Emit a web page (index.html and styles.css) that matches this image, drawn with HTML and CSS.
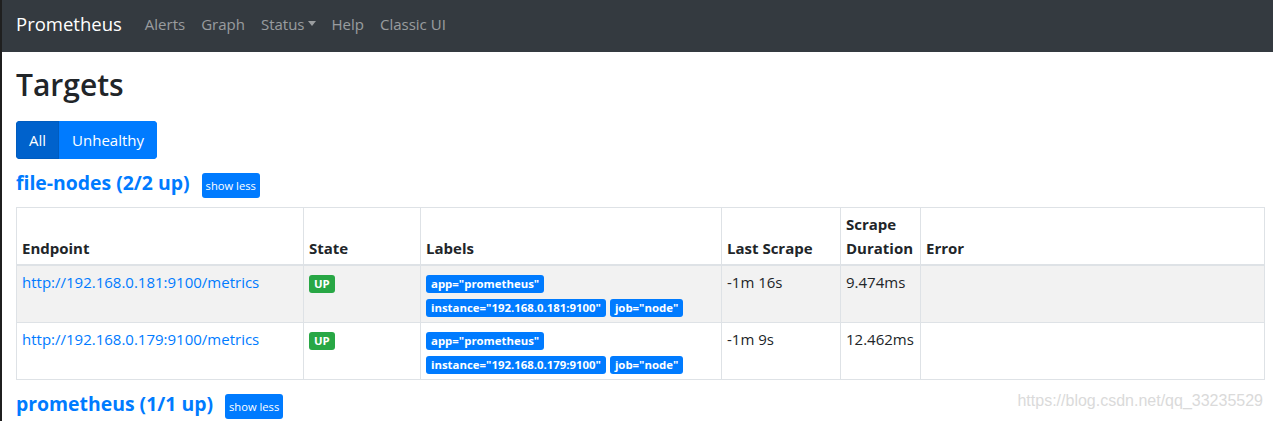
FILE: index.html
```html
<!DOCTYPE html>
<html lang="en">
<head>
<meta charset="utf-8">
<title>Prometheus Time Series Collection and Processing Server</title>
<link rel="stylesheet" href="styles.css">
</head>
<body>
<nav class="navbar">
  <a class="brand" href="#">Prometheus</a>
  <ul class="nav">
    <li><a class="nav-link" href="#">Alerts</a></li>
    <li><a class="nav-link" href="#">Graph</a></li>
    <li><a class="nav-link dropdown-toggle" href="#">Status</a></li>
    <li><a class="nav-link" href="#">Help</a></li>
    <li><a class="nav-link" href="#">Classic UI</a></li>
  </ul>
</nav>
<main class="container">
  <h2 class="title">Targets</h2>
  <div class="btn-group">
    <button class="btn active">All</button><button class="btn">Unhealthy</button>
  </div>

  <section class="pool">
    <div class="pool-header">
      <a class="pool-name" href="#">file-nodes (2/2 up)</a>
      <button class="btn-xs">show less</button>
    </div>
    <table class="targets">
      <colgroup>
        <col class="c-endpoint"><col class="c-state"><col class="c-labels"><col class="c-last"><col class="c-dur"><col class="c-err">
      </colgroup>
      <thead>
        <tr><th>Endpoint</th><th>State</th><th>Labels</th><th>Last Scrape</th><th>Scrape Duration</th><th>Error</th></tr>
      </thead>
      <tbody>
        <tr class="striped">
          <td><a href="#">http://192.168.0.181:9100/metrics</a></td>
          <td><span class="badge badge-up">UP</span></td>
          <td><span class="badge">app="prometheus"</span> <span class="badge">instance="192.168.0.181:9100"</span> <span class="badge">job="node"</span></td>
          <td>-1m 16s</td>
          <td>9.474ms</td>
          <td></td>
        </tr>
        <tr>
          <td><a href="#">http://192.168.0.179:9100/metrics</a></td>
          <td><span class="badge badge-up">UP</span></td>
          <td><span class="badge">app="prometheus"</span> <span class="badge">instance="192.168.0.179:9100"</span> <span class="badge">job="node"</span></td>
          <td>-1m 9s</td>
          <td>12.462ms</td>
          <td></td>
        </tr>
      </tbody>
    </table>
  </section>

  <section class="pool">
    <div class="pool-header">
      <a class="pool-name" href="#">prometheus (1/1 up)</a>
      <button class="btn-xs">show less</button>
    </div>
  </section>
</main>
<div class="watermark">https://blog.csdn.net/qq_33235529</div>
</body>
</html>
```
FILE: styles.css
```css
html, body {
  margin: 0;
  padding: 0;
}
body {
  font-family: "Open Sans", "Noto Sans", sans-serif;
  font-size: 15px;
  line-height: 24px;
  color: #212529;
  background: #fff;
  border-left: 2px solid #1f1f1f;
  min-height: 100vh;
  box-sizing: border-box;
  overflow: hidden;
}
a {
  text-decoration: none;
  color: #007bff;
}

/* navbar */
.navbar {
  display: flex;
  align-items: center;
  height: 52px;
  box-sizing: border-box;
  padding: 0 16px 5px 14px;
  background: #343a40;
}
.brand {
  color: #fff;
  font-size: 18.5px;
  line-height: 28px;
  margin-right: 15px;
}
.nav {
  display: flex;
  list-style: none;
  margin: 0;
  padding: 0;
}
.nav-link {
  display: block;
  padding: 0 8px;
  font-size: 15px;
  line-height: 24px;
  color: rgba(255, 255, 255, 0.5);
}
.dropdown-toggle::after {
  content: "";
  display: inline-block;
  margin-left: 3px;
  vertical-align: 4px;
  border-top: 5px solid;
  border-left: 4.5px solid transparent;
  border-right: 4.5px solid transparent;
}

/* content */
.container {
  padding: 0 9px 0 14px;
}
.title {
  margin: 15px 0 18px;
  font-size: 30px;
  line-height: 36px;
  font-weight: 600;
}
.btn-group {
  display: inline-flex;
  border-radius: 4px;
  overflow: hidden;
  vertical-align: top;
}
.btn {
  font-family: inherit;
  font-size: 15px;
  line-height: 24px;
  padding: 6px 12px;
  border: 1px solid #007bff;
  background: #007bff;
  color: #fff;
  margin: 0;
}
.btn.active {
  background: #0062cc;
  border-color: #005cbf;
}

.pool-header {
  display: flex;
  align-items: baseline;
  gap: 12px;
  margin: 12px 0 9px;
}
.pool-name {
  font-size: 19.4px;
  line-height: 24px;
  font-weight: 700;
  color: #007bff;
}
.btn-xs {
  font-family: inherit;
  font-size: 11.2px;
  line-height: 17px;
  padding: 4px 4px;
  border: 0;
  border-radius: 3px;
  background: #007bff;
  color: #fff;
  margin: 0;
}

/* table */
.targets {
  width: 100%;
  border-collapse: collapse;
  table-layout: fixed;
  margin-bottom: 3px;
}
.c-endpoint { width: 287px; }
.c-state { width: 117px; }
.c-labels { width: 301px; }
.c-last { width: 119px; }
.c-dur { width: 80px; }
.c-err { width: 344px; }
.targets th,
.targets td {
  border: 1px solid #dee2e6;
  padding: 4px 5px;
  text-align: left;
  vertical-align: top;
}
.targets th {
  vertical-align: bottom;
  font-weight: 700;
  border-bottom-width: 2px;
}
.targets tr.striped td {
  background: #f2f2f2;
}

.badge {
  display: inline-block;
  font-size: 11.4px;
  line-height: 12px;
  font-weight: 700;
  padding: 3px 5px;
  border-radius: 3px;
  background: #007bff;
  color: #fff;
  white-space: nowrap;
  vertical-align: baseline;
}
.badge-up {
  background: #28a745;
}

.watermark {
  position: absolute;
  right: 10px;
  top: 392px;
  font-family: "Liberation Sans", Arial, sans-serif;
  font-size: 16px;
  line-height: 18px;
  color: #dadada;
}
```
